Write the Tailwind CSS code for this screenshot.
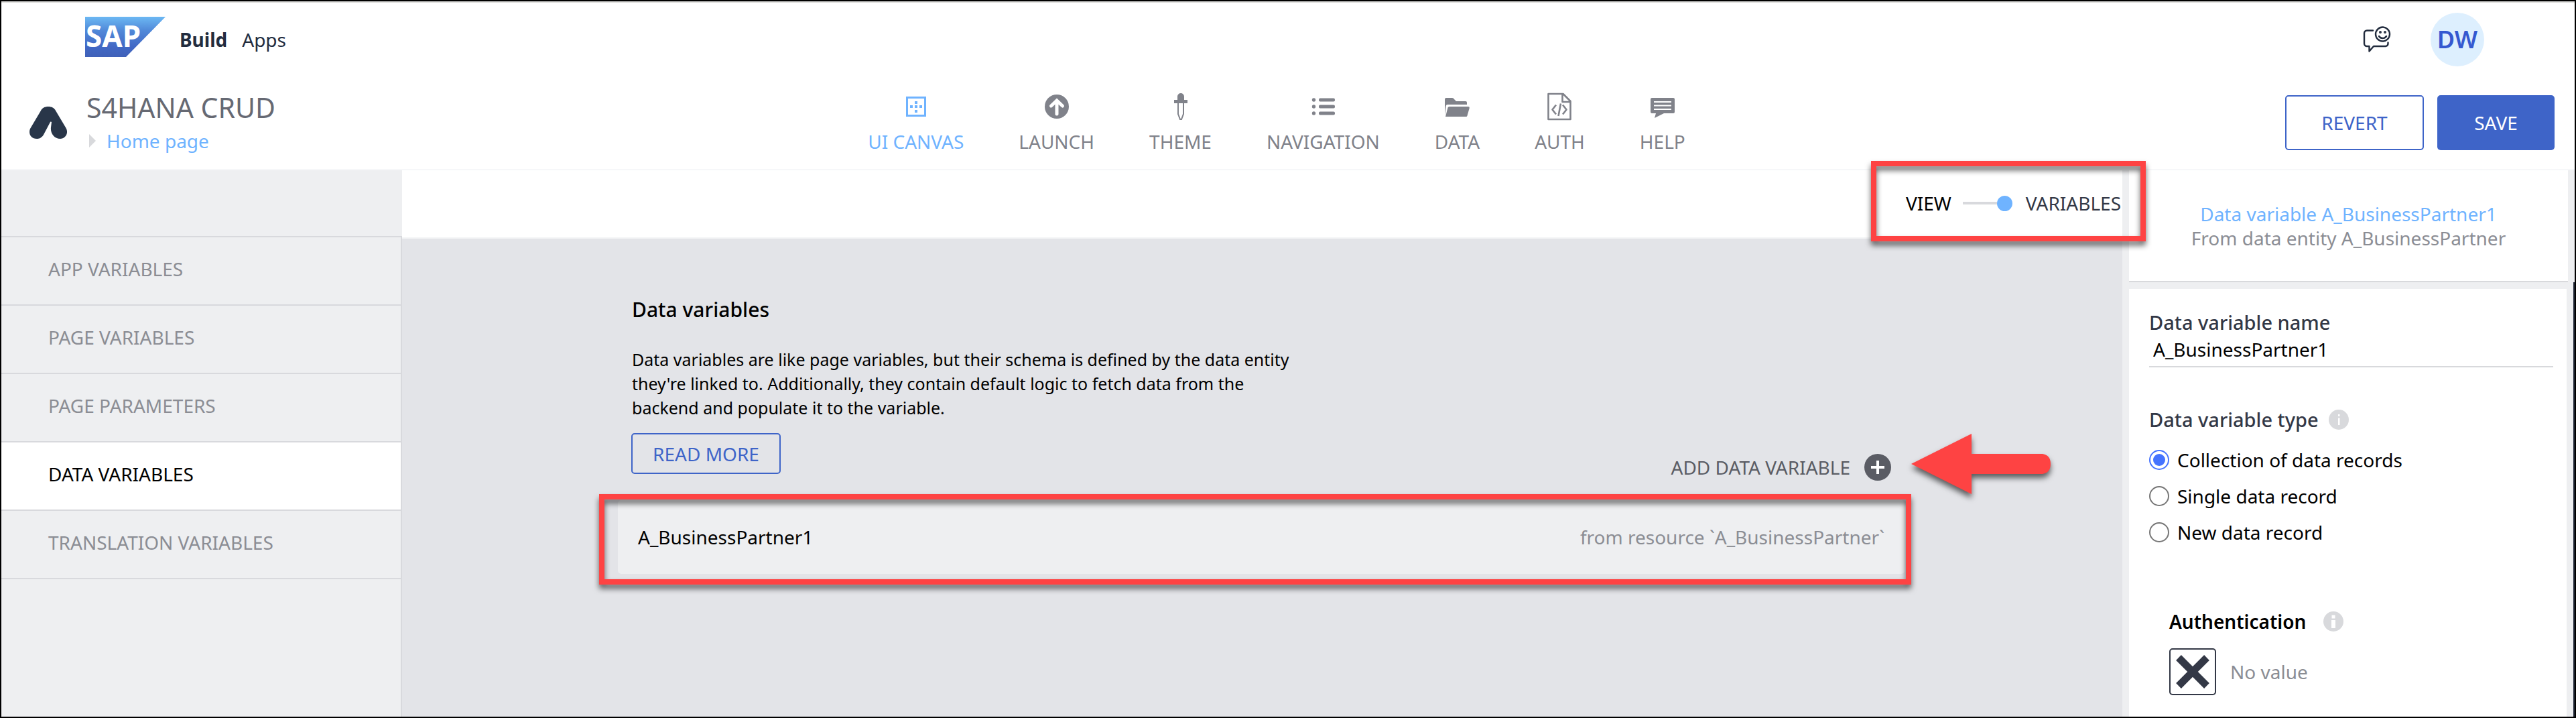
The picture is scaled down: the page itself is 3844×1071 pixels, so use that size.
<!DOCTYPE html>
<html lang="en">
<head>
<meta charset="utf-8">
<title>S4HANA CRUD – SAP Build Apps</title>
<script src="https://cdn.jsdelivr.net/npm/@tailwindcss/browser@4"></script>
</head>
<body class="flex min-h-screen flex-col border-2 border-black bg-white font-['Noto_Sans',sans-serif] text-[28px] leading-9 text-black">

<!-- Product bar -->
<div class="flex h-28 items-center border-t-2 border-[#dcdcda] pr-[135px] pl-[125px]">
  <a href="#" class="pb-2" aria-label="SAP">
    <svg class="block h-[60px] w-[120px]" viewBox="0 0 120 60">
      <defs><linearGradient id="sap" x1="0" y1="0" x2="0" y2="1"><stop offset="0" stop-color="#6cb8f3"/><stop offset=".35" stop-color="#5088d8"/><stop offset=".75" stop-color="#4168c5"/><stop offset="1" stop-color="#3f60b8"/></linearGradient></defs>
      <path d="M0 0H120L61 60H0Z" fill="url(#sap)"/>
      <text x="1" y="45" font-family="Noto Sans, sans-serif" font-weight="700" font-size="44" fill="#fff">SAP</text>
    </svg>
  </a>
  <span class="ml-[21px] font-bold text-[#222c3e]">Build</span>
  <span class="ml-[22px] text-[#222c3e]">Apps</span>
  <button class="ml-auto" aria-label="Feedback">
    <svg class="block h-[40px] w-[42px]" viewBox="0 0 42 40" fill="none" stroke="#222c3e" stroke-width="2.4" stroke-linecap="round" stroke-linejoin="round">
      <path d="M15 6.500H6A4 4 0 0 0 2 10.500V26A4 4 0 0 0 6 30H9.500V37.500L16 30H34A4 4 0 0 0 37.500 26V24.500"/>
      <circle cx="29.500" cy="12" r="10.500"/>
      <circle cx="26" cy="9" r=".8" fill="#222c3e"/><circle cx="33" cy="9" r=".8" fill="#222c3e"/>
      <path d="M24 15C26.500 19 32.500 19 35 15"/>
    </svg>
  </button>
  <button class="ml-[59px] size-20 rounded-full bg-[#ddeffe] text-[36px] font-semibold text-[#3559d0]">DW</button>
</div>

<!-- App header -->
<header class="flex h-[140px] items-center justify-between border-b-2 border-[#f6f7f9] pr-[30px] pl-[42px]">
  <div class="flex w-[356px] items-center gap-[29px]">
    <svg class="h-[48px] w-[56px] shrink-0" viewBox="0 0 56 48" fill="#293649">
      <path d="M28 0C33 0 37 2 39 6L54.500 32C59 40 53 48 46 48C37 48 31 40 32 31L33 23C32 22 31 22.500 30.500 24L21 42C18 47 14 48 11 48C2 48-2 40 1 33L17 6C19 2 23 0 28 0Z"/>
    </svg>
    <div class="flex flex-col gap-[6px]">
      <h1 class="text-[41px] leading-[48px] whitespace-nowrap text-[#666973]">S4HANA CRUD</h1>
      <a href="#" class="flex items-center gap-[16px] leading-10 text-[#6fb3ff]">
        <svg class="ml-1 h-5 w-[10px]" viewBox="0 0 10 20"><path d="M0 0L10 10L0 20Z" fill="#d8d9dc"/></svg>Home page</a>
    </div>
  </div>
  <nav class="flex gap-[82px] text-[#80828a]">
    <a href="#" class="flex flex-col items-center gap-3 text-[#6fb3ff]">
      <svg class="h-11 w-[30px]" viewBox="0 0 30 44" fill="#6fb3ff"><path d="M1.500 8.500H28.500V35.500H1.500Z" fill="none" stroke="#6fb3ff" stroke-width="3"/><path d="M13 14h4v4h-4zM13 20h4v4h-4zM13 27h4v4h-4zM6 20h4v4H6zM20 20h4v4h-4z"/></svg>UI CANVAS</a>
    <a href="#" class="flex flex-col items-center gap-3">
      <svg class="h-11 w-9" viewBox="0 0 36 44"><circle cx="18" cy="22" r="18" fill="#80828a"/><path d="M18 33V14M9.500 21L18 13L26.500 21" fill="none" stroke="#fff" stroke-width="5" stroke-linecap="round"/></svg>LAUNCH</a>
    <a href="#" class="flex flex-col items-center gap-3">
      <svg class="h-11 w-5" viewBox="0 0 20 44" fill="#80828a"><path d="M5 7A5 5 0 0 1 15 7V12H20V17H0V12H5Z"/><path d="M6 16V33L9 41H11L14 33V16" fill="none" stroke="#80828a" stroke-width="2"/></svg>THEME</a>
    <a href="#" class="flex flex-col items-center gap-3">
      <svg class="h-11 w-9" viewBox="0 0 36 44" fill="#80828a"><circle cx="4.500" cy="12" r="2.700"/><circle cx="4.500" cy="22" r="2.700"/><circle cx="4.500" cy="32" r="2.700"/><rect x="12" y="9.500" width="24" height="5" rx="2"/><rect x="12" y="19.500" width="24" height="5" rx="2"/><rect x="12" y="29.500" width="24" height="5" rx="2"/></svg>NAVIGATION</a>
    <a href="#" class="flex flex-col items-center gap-3">
      <svg class="h-11 w-[37px]" viewBox="0 0 37 44" fill="#80828a"><path d="M0 35V11A2 2 0 0 1 2 9H11Q13 9 14 11L17 14H31A2 2 0 0 1 33 16V19H4Q2 19 1.700 21Z"/><path d="M1 37L4.500 23.500Q5 22 7 22H35Q37 22 36.800 24L33.500 35.500Q33 37 32 37Z"/></svg>DATA</a>
    <a href="#" class="flex flex-col items-center gap-3">
      <svg class="h-11 w-[36px]" viewBox="0 0 36 44" fill="none" stroke="#80828a" stroke-width="2.600" stroke-linejoin="round"><path d="M23.500 3H1.500V41H34.500V14Z M22.500 3V15H34.500"/><path d="M13 19.500L7.500 26.500L13 33.500M23 19.500L28.500 26.500L23 33.500M20 17.500L16.500 36"/></svg>AUTH</a>
    <a href="#" class="flex flex-col items-center gap-3">
      <svg class="h-11 w-9" viewBox="0 0 36 44"><path d="M2 9H34A2 2 0 0 1 36 11V30A2 2 0 0 1 34 32H20L6 39L8 32H2A2 2 0 0 1 0 30V11A2 2 0 0 1 2 9Z" fill="#80828a"/><path d="M5 15H31M5 20.500H31M5 26H31" stroke="#fff" stroke-width="2"/></svg>HELP</a>
  </nav>
  <div class="flex gap-5">
    <button class="h-[82px] w-[207px] rounded-[5px] border-2 border-[#3e64c8] text-[#3e64c8]">REVERT</button>
    <button class="h-[82px] w-[175px] rounded-[5px] bg-[#3e64c8] text-white">SAVE</button>
  </div>
</header>

<div class="flex flex-1">
  <!-- Variable kinds -->
  <div class="flex w-[598px] shrink-0 flex-col bg-[#eeeff1]">
    <nav class="mt-[98px] flex flex-1 flex-col border-r-2 border-[#d8d9dd] text-[#8b8d94]">
      <a href="#" class="flex h-[102px] items-center border-t-2 border-[#d8d9dd] px-[70px] pb-[6px]">APP VARIABLES</a>
      <a href="#" class="flex h-[102px] items-center border-t-2 border-[#d8d9dd] px-[70px] pb-[6px]">PAGE VARIABLES</a>
      <a href="#" class="flex h-[102px] items-center border-t-2 border-[#d8d9dd] px-[70px] pb-[6px]">PAGE PARAMETERS</a>
      <a href="#" class="flex h-[102px] items-center border-t-2 border-[#d8d9dd] bg-white px-[70px] pb-[6px] text-black">DATA VARIABLES</a>
      <a href="#" class="flex h-[104px] items-center border-y-2 border-[#d8d9dd] px-[70px] pb-[6px]">TRANSLATION VARIABLES</a>
    </nav>
  </div>

  <!-- Canvas -->
  <main class="flex min-w-0 flex-1 flex-col bg-[#e3e4e8]">
    <div class="relative flex h-[102px] items-center justify-end border-b-2 border-[#f3f4f6] bg-white pr-[2px] pb-[2px]">
      <span>VIEW</span>
      <button role="switch" aria-checked="true" aria-label="View or variables" class="mr-5 ml-[17px] flex items-center">
        <span class="h-1 w-[51px] bg-[#d8d9dd]"></span><span class="size-[23px] rounded-full bg-[#6fb3ff]"></span>
      </button>
      <span class="text-[#333846]">VARIABLES</span>
      <div class="absolute -top-[14px] -right-[35px] z-10 h-[120px] w-[410px] border-8 border-[#fe4343] drop-shadow-[0_6px_4px_rgba(0,0,0,0.6)]"></div>
    </div>

    <div class="flex justify-center pr-[3px]">
      <div class="w-full max-w-[1920px] pt-[86px]">
        <div class="px-[21px]">
          <h2 class="text-[30px] leading-10 font-medium">Data variables</h2>
          <p class="mt-9 max-w-[990px] text-[25px] leading-9">Data variables are like page variables, but their schema is defined by the data entity they're linked to. Additionally, they contain default logic to fetch data from the backend and populate it to the variable.</p>
        </div>
        <div class="relative mt-5 flex items-end justify-between px-5">
          <button class="mb-[10px] h-[61px] w-[223px] rounded-[5px] border-2 border-[#3e64c8] text-[#3e64c8]">READ MORE</button>
          <button class="flex h-10 items-center gap-[21px] text-[#5a5c64]">ADD DATA VARIABLE
            <svg class="size-10" viewBox="0 0 40 40"><circle cx="20" cy="20" r="20" fill="#5a5c64"/><path d="M20 10V30M10 20H30" stroke="#fff" stroke-width="4"/></svg>
          </button>
          <svg class="absolute -bottom-5 left-full ml-[10px] h-[90px] w-[208px] overflow-visible drop-shadow-[0_6px_4px_rgba(0,0,0,0.6)]" viewBox="0 0 208 90"><path d="M0 45L90 0V30H196Q208 32 208 45Q208 58 196 60H90V90Z" fill="#fe4343"/></svg>
        </div>
        <div class="relative mt-[29px] flex h-[110px] items-center justify-between rounded-[5px] bg-[#eeeff1] px-[30px]">
          <span>A_BusinessPartner1</span>
          <span class="text-[#8b8d94]">from resource `A_BusinessPartner`</span>
          <div class="absolute -top-[9px] -right-[10px] -bottom-4 -left-7 border-8 border-[#fe4343] drop-shadow-[0_6px_4px_rgba(0,0,0,0.6)]"></div>
        </div>
      </div>
    </div>
  </main>

  <!-- Variable properties -->
  <aside class="flex w-[675px] shrink-0 flex-col bg-[#eeeff1] pl-[10px]">
    <div class="mr-[10px] flex h-[167px] flex-col justify-center border-b-2 border-[#d8d9dc] bg-white text-center">
      <p class="text-[#6fb3ff]">Data variable A_BusinessPartner1</p>
      <p class="text-[#8b8d94]">From data entity A_BusinessPartner</p>
    </div>
    <div class="flex flex-1 flex-col border-r-2 border-[#222838] pt-[10px] pr-[10px]">
      <form class="flex-1 bg-white pt-[30px] pr-5 pl-[30px]">
        <label for="name" class="block text-[29px] leading-10 font-medium text-[#333846]">Data variable name</label>
        <input id="name" type="text" value="A_BusinessPartner1" class="block h-[47px] w-full border-b-2 border-[#d8d9dc] pb-[6px] pl-[6px] outline-none">
        <fieldset class="mt-[58px]">
          <legend class="mb-[13px] flex items-center gap-[15px] text-[29px] leading-10 font-medium text-[#333846]">Data variable type
            <svg class="size-[30px]" viewBox="0 0 30 30"><circle cx="15" cy="15" r="15" fill="#d8d9dc"/><path d="M14 7h2.500v3H14zM14 12.500h2.500V23H14z" fill="#fff"/></svg>
          </legend>
          <label class="flex h-[54px] items-center gap-3"><input type="radio" name="type" checked class="size-[30px] appearance-none rounded-full border-2 border-[#767676] bg-clip-content p-1 checked:border-[#4573ff] checked:bg-[#4573ff]">Collection of data records</label>
          <label class="flex h-[54px] items-center gap-3"><input type="radio" name="type" class="size-[30px] appearance-none rounded-full border-2 border-[#767676] bg-clip-content p-1 checked:border-[#4573ff] checked:bg-[#4573ff]">Single data record</label>
          <label class="flex h-[54px] items-center gap-3"><input type="radio" name="type" class="size-[30px] appearance-none rounded-full border-2 border-[#767676] bg-clip-content p-1 checked:border-[#4573ff] checked:bg-[#4573ff]">New data record</label>
        </fieldset>
        <div class="mt-[86px] pl-[30px]">
          <h3 class="flex items-center gap-[26px] leading-10 font-semibold">Authentication
            <svg class="size-[30px]" viewBox="0 0 30 30"><circle cx="15" cy="15" r="15" fill="#d8d9dc"/><path d="M12.500 5.500h5v5h-5zM12 13h6v12h-6z" fill="#fff"/></svg>
          </h3>
          <div class="mt-5 flex items-center gap-[21px] text-[#8b8d94]">
            <button type="button" aria-label="Edit binding" class="size-[70px] rounded-[5px] border-2 border-[#333846]">
              <svg class="size-full" viewBox="0 0 66 66"><path d="M12 12L54 54M54 12L12 54" stroke="#333846" stroke-width="11"/></svg>
            </button>
            No value
          </div>
        </div>
      </form>
    </div>
  </aside>
</div>
</body>
</html>
